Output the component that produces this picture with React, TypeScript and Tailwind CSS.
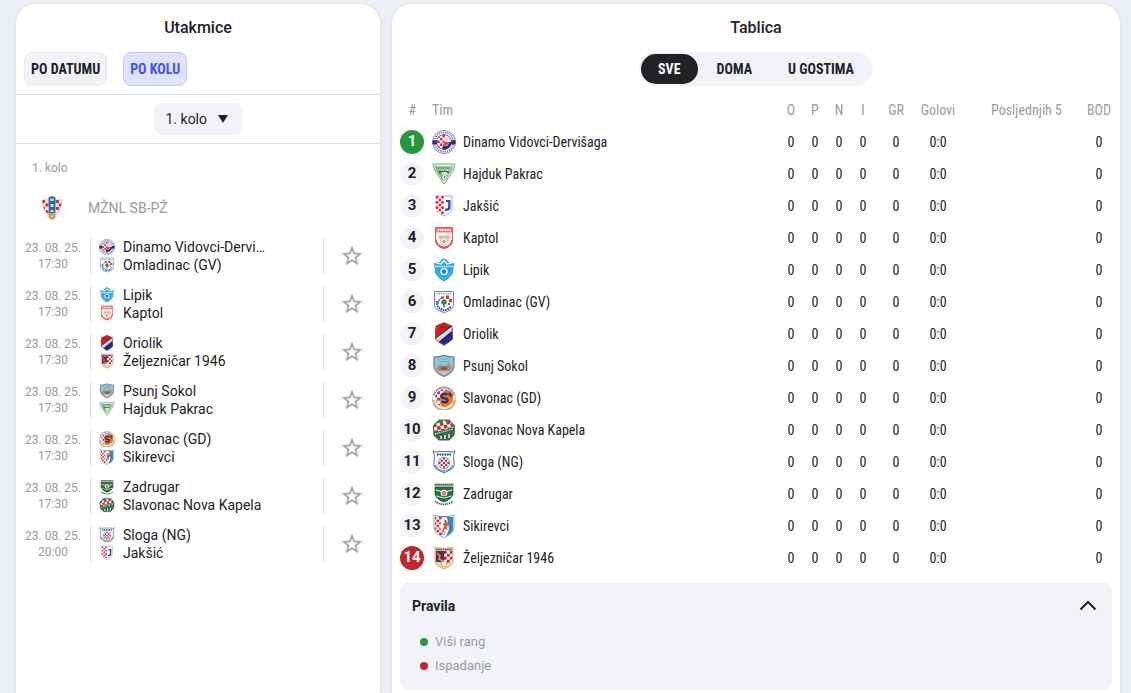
import { useId, useState } from 'react';
import type { ReactNode } from 'react';

interface Team {
  id: string;
  name: string;
}

interface Match {
  id: number;
  date: string;
  time: string;
  home: string;
  away: string;
}

const teams: Team[] = [
  { id: 'dinamo', name: 'Dinamo Vidovci-Dervišaga' },
  { id: 'hajduk', name: 'Hajduk Pakrac' },
  { id: 'jaksic', name: 'Jakšić' },
  { id: 'kaptol', name: 'Kaptol' },
  { id: 'lipik', name: 'Lipik' },
  { id: 'omladinac', name: 'Omladinac (GV)' },
  { id: 'oriolik', name: 'Oriolik' },
  { id: 'psunj', name: 'Psunj Sokol' },
  { id: 'slavonacgd', name: 'Slavonac (GD)' },
  { id: 'slavonacnk', name: 'Slavonac Nova Kapela' },
  { id: 'sloga', name: 'Sloga (NG)' },
  { id: 'zadrugar', name: 'Zadrugar' },
  { id: 'sikirevci', name: 'Sikirevci' },
  { id: 'zeljeznicar', name: 'Željezničar 1946' }
];

const matches: Match[] = [
  { id: 1, date: '23. 08. 25.', time: '17:30', home: 'dinamo', away: 'omladinac' },
  { id: 2, date: '23. 08. 25.', time: '17:30', home: 'lipik', away: 'kaptol' },
  { id: 3, date: '23. 08. 25.', time: '17:30', home: 'oriolik', away: 'zeljeznicar' },
  { id: 4, date: '23. 08. 25.', time: '17:30', home: 'psunj', away: 'hajduk' },
  { id: 5, date: '23. 08. 25.', time: '17:30', home: 'slavonacgd', away: 'sikirevci' },
  { id: 6, date: '23. 08. 25.', time: '17:30', home: 'zadrugar', away: 'slavonacnk' },
  { id: 7, date: '23. 08. 25.', time: '20:00', home: 'sloga', away: 'jaksic' }
];

const teamName = (id: string) => teams.find((t) => t.id === id)?.name ?? '';

// Red and white squares, used by most of the crests
function Checks({ x, y, cols, rows, size, color = '#e0242f' }: {
  x: number; y: number; cols: number; rows: number; size: number; color?: string;
}) {
  const cells: ReactNode[] = [];
  for (let r = 0; r < rows; r++) {
    for (let c = 0; c < cols; c++) {
      cells.push(
        <rect
          key={`${r}-${c}`}
          x={x + c * size}
          y={y + r * size}
          width={size}
          height={size}
          fill={(r + c) % 2 === 0 ? color : '#fff'}
        />
      );
    }
  }
  return <>{cells}</>;
}

const SHIELD = 'M3 2H21V14Q21 20 12 23Q3 20 3 14Z';

function crestArt(team: string, clip: string): ReactNode {
  switch (team) {
    case 'dinamo':
      return (
        <>
          <clipPath id={clip}><circle cx="12" cy="12" r="7.5" /></clipPath>
          <circle cx="12" cy="12" r="11.5" fill="#fff" stroke="#6b6aa0" strokeWidth=".8" />
          <circle cx="12" cy="12" r="9.6" fill="none" stroke="#6765a0" strokeWidth="1.6" strokeDasharray="1.2 1" />
          <rect x=".5" y="10.3" width="23" height="4" fill="#2d2a78" />
          <g clipPath={`url(#${clip})`}>
            <rect x="4" y="4" width="16" height="16" fill="#fff" />
            <Checks x={5} y={5} cols={3} rows={6} size={2.8} />
            <path d="M12 12H20V20H10Z" fill="#2d2a78" />
            <path d="M12.5 5.5L16 8L19 7L17 11H12.5Z" fill="#d9d9ec" />
          </g>
          <circle cx="12" cy="12" r="7.5" fill="none" stroke="#2d2a78" strokeWidth=".7" />
          <circle cx="14" cy="13.5" r="2.3" fill="#d5303f" stroke="#fff" strokeWidth=".6" />
        </>
      );
    case 'hajduk':
      return (
        <>
          <path d="M1 2H23L21 9L12 22L3 9Z" fill="#e8f3ea" stroke="#6fae7b" strokeWidth="1" />
          <path d="M3 4H8L11 19L4 8Z" fill="#5fb56e" />
          <path d="M21 4H17L14 17L20 8Z" fill="#8cc897" />
          <path d="M5 4H19V8H5Z" fill="#a9c8ae" />
          <path d="M6 6H18" stroke="#5a8a63" strokeWidth="2" strokeDasharray="1.3 1" />
          <path d="M7 10.5Q12 8 17 10.5" stroke="#2d6d3b" strokeWidth="1.4" fill="none" />
          <circle cx="12.5" cy="15" r="2.6" fill="#fff" stroke="#6f8a74" strokeWidth=".7" />
          <circle cx="12.5" cy="15" r=".9" fill="#5d7361" />
        </>
      );
    case 'jaksic':
      return (
        <>
          <clipPath id={clip}><path d="M4 2H12V21Q4 18 4 14Z" /></clipPath>
          <path d="M4 2H20V14Q20 19 12 22Q4 19 4 14Z" fill="#fff" stroke="#8e9bb5" strokeWidth=".8" />
          <g clipPath={`url(#${clip})`}><Checks x={4} y={2} cols={3} rows={8} size={2.6} /></g>
          <path d="M14 6H18.5V14Q18.5 17 13 17V14.8Q16.2 15 16.2 13V8H14Z" fill="#24519b" />
        </>
      );
    case 'kaptol':
      return (
        <>
          <path d="M3.5 1.5H20.5V14Q20.5 20 12 22.5Q3.5 20 3.5 14Z" fill="#fff" stroke="#e05a56" strokeWidth="1.2" />
          <rect x="4" y="2" width="16" height="4.5" fill="#ef7771" />
          <path d="M5.5 4.2H18.5" stroke="#fff" strokeWidth="1.7" strokeDasharray="1.6 .8" />
          <path d="M6 10L9 8.5L12 10L16 8L19 11L17 15H8Z" fill="#f3cdb9" />
          <path d="M7 11.5Q11 9 17 11.5" stroke="#a89a95" strokeWidth=".7" fill="none" />
          <path d="M4 14Q5 20.5 12 21.5Q19 20.5 20 14" fill="none" stroke="#e3453f" strokeWidth="1.5" />
          <circle cx="12" cy="15.5" r="3.7" fill="#f5f5f5" stroke="#a9a9a9" strokeWidth=".7" />
          <path d="M12 13.5L14 15L13 17.3H11L10 15Z" fill="#a3a3a3" />
        </>
      );
    case 'lipik':
      return (
        <>
          <path d="M2 5L8 4L9 1.5L12 .5L15 1.5L16 4L22 5L21 15Q18 20 12 23.5Q6 20 3 15Z" fill="#2aa3dc" />
          <path d="M4 5L9 6L12 2.5L15 6L20 5" fill="none" stroke="#dff3fc" strokeWidth="1.5" />
          <path d="M3 8.5H21" stroke="#fff" strokeWidth="1.7" strokeDasharray="1.4 .8" />
          <path d="M4 11Q6 18 12 21Q18 18 20 11" fill="none" stroke="#7ccbed" strokeWidth=".8" />
          <circle cx="12" cy="13.5" r="3.8" fill="#dff3fc" />
          <path d="M12 11L14.4 12.8L13.5 15.7H10.5L9.6 12.8Z" fill="#1787c4" />
        </>
      );
    case 'omladinac':
      return (
        <>
          <path d="M2.5 1.5H21.5V15Q21.5 20 12 22.5Q2.5 20 2.5 15Z" fill="#fff" stroke="#6c6fae" strokeWidth=".9" />
          <path d="M4.5 3.8H19.5" stroke="#9496c5" strokeWidth="1.5" strokeDasharray="1.3 .9" />
          <path d="M5 11A7.5 7.5 0 0 0 19 16" fill="none" stroke="#3e4298" strokeWidth="2.2" strokeDasharray="1.5 .8" />
          <path d="M6 14A7 7 0 0 1 12 7" fill="none" stroke="#6265ac" strokeWidth="1.2" />
          <path d="M9 6.500H12V8.500H9ZM14 5.500H17V9H14ZM17 9H20V12H17ZM16 13H18V15H16Z" fill="#e32b31" />
          <circle cx="12" cy="12" r="2.8" fill="#259b4c" />
          <path d="M11.3 13H12.7V17.5H11.3Z" fill="#1e7e3c" />
        </>
      );
    case 'oriolik':
      return (
        <>
          <clipPath id={clip}><path d="M12 .5L20 4L21 17L16 21L12 23.5L8 21L3 17L4 4Z" /></clipPath>
          <g clipPath={`url(#${clip})`}>
            <rect width="24" height="24" fill="#1d2b8f" />
            <path d="M0 0H22L2 18Z" fill="#dd1b1d" />
            <path d="M22 3V7L5 21L2 18Z" fill="#f5ecd9" />
            <path d="M6 18L20 7" stroke="#a3854e" strokeWidth=".6" strokeDasharray="1.5 .8" />
          </g>
          <path d="M12 .8L20 4L20.7 17L16 20.7L12 23L8 20.7L3.3 17L4 4Z" fill="none" stroke="#7d5533" strokeWidth=".9" />
          <path d="M8 5H14" stroke="#7e2225" strokeWidth="1.5" />
        </>
      );
    case 'psunj':
      return (
        <>
          <path d="M2 3Q7 3 12 1.2Q17 3 22 3V13Q21 19 12 22.5Q3 19 2 13Z" fill="#8cc8dc" stroke="#77767c" strokeWidth="1.2" />
          <path d="M6 5H18M7 7.5H17" stroke="#6f9db2" strokeWidth="1.2" strokeDasharray="1.5 .7" />
          <path d="M4 14L8 10L12 13L17 9L20 13L18 17H6Z" fill="#bc8672" />
          <path d="M8 14L12 12L16 14L14 16H10Z" fill="#7d5f56" />
          <path d="M8 17H16L12 21Z" fill="#eab7a3" />
        </>
      );
    case 'slavonacgd':
      return (
        <>
          <clipPath id={clip}><circle cx="12" cy="12" r="9" /></clipPath>
          <circle cx="12" cy="12" r="11.5" fill="#fff" stroke="#8c8ab0" strokeWidth=".6" />
          <path d="M1.5 14A10.5 10.5 0 0 0 22.5 14" fill="none" stroke="#c8a56b" strokeWidth="2.2" strokeDasharray="1.8 .4" />
          <path d="M2 9A10.5 10.5 0 0 1 22 9" fill="none" stroke="#5359a4" strokeWidth="1.5" strokeDasharray="1.2 .9" />
          <g clipPath={`url(#${clip})`}>
            <Checks x={2} y={2} cols={5} rows={6} size={3.2} />
            <path d="M13 3H22V22H8L10 15Z" fill="#ed7a16" />
          </g>
          <circle cx="14.5" cy="13" r="6.6" fill="#ed7a16" />
          <path d="M18 5L21 9L18.5 12L16 8Z" fill="#744127" />
          <path d="M15.5 8.5Q9.5 6.5 9.5 10Q9.5 12 12.5 12.3Q16 12.7 15.5 15Q14.5 17.5 9.5 15.5" fill="none" stroke="#1f3190" strokeWidth="2.4" />
        </>
      );
    case 'slavonacnk':
      return (
        <>
          <clipPath id={clip}><path d="M7 2H17L22.5 8L22 17L17 22H7L2 17L1.5 8Z" /></clipPath>
          <g clipPath={`url(#${clip})`}>
            <rect width="24" height="24" fill="#2c8a4d" />
            <g transform="rotate(-12 12 10)"><Checks x={2} y={4} cols={6} rows={3} size={3.4} /></g>
            <path d="M0 15L23 9V13L1 19Z" fill="#26723f" />
            <path d="M3 16L21 11" stroke="#d9ebdf" strokeWidth="1.3" strokeDasharray="1.3 .8" />
            <path d="M3 19L20 14.5L20 20L10 22Z" fill="#47564c" />
            <path d="M9 18V21M13 17V21M17 16V20" stroke="#eef3ef" strokeWidth="1.5" />
          </g>
          <path d="M7 2H17L22.5 8L22 17L17 22H7L2 17L1.5 8Z" fill="none" stroke="#2f7048" strokeWidth="1.1" />
          <circle cx="12" cy="3.5" r="1.2" fill="#d3e2d5" />
        </>
      );
    case 'sloga':
      return (
        <>
          <clipPath id={clip}><circle cx="12" cy="13" r="5.5" /></clipPath>
          <path d="M1 1Q4 3 7 1.5H17Q20 3 23 1Q20.5 6 22 12Q23 18 18 20L12 23L6 20Q1 18 2 12Q3.5 6 1 1Z" fill="#f3f7fb" stroke="#50759d" strokeWidth="1" />
          <path d="M5 4.5H19" stroke="#284c79" strokeWidth="1.9" strokeDasharray="1.7 .8" />
          <g clipPath={`url(#${clip})`}><Checks x={6.5} y={7.5} cols={5} rows={5} size={2.2} color="#c8202c" /></g>
          <circle cx="12" cy="13" r="5.7" fill="none" stroke="#5e80a5" strokeWidth=".7" />
          <path d="M3.5 15Q5 20.5 12 21Q19 20.5 20.5 15" fill="none" stroke="#5e80a5" strokeWidth="1.7" strokeDasharray="1.5 .6" />
        </>
      );
    case 'zadrugar':
      return (
        <>
          <path d="M2 1.5H22V4H2Z" fill="#b2aaae" />
          <path d="M3 2.7H21" stroke="#603e45" strokeWidth="1.3" strokeDasharray="1.3 .7" />
          <path d="M3 5H21V12Q20 17 12 20Q4 17 3 12Z" fill="#1d7442" stroke="#164e30" strokeWidth=".8" />
          <path d="M3.5 8L12 10L20.5 8" fill="none" stroke="#e2eee5" strokeWidth="1.2" />
          <path d="M4.5 14L12 16L19.5 14" fill="none" stroke="#e2eee5" strokeWidth="1" />
          <circle cx="12" cy="11" r="3.3" fill="#fff" />
          <path d="M12 8.5L14.5 10.5L13.5 13.5H10.5L9.5 10.5Z" fill="#e07373" />
          <path d="M3 19Q6 22 12 22.5Q18 22 21 19" fill="none" stroke="#4e568c" strokeWidth="1.7" strokeDasharray="1.4 .7" />
        </>
      );
    case 'sikirevci':
      return (
        <>
          <clipPath id={clip}><path d={SHIELD} /></clipPath>
          <path d="M2 1L7 2.5H17L22 1V14Q21 20 12 23.5Q3 20 2 14Z" fill="#fff" stroke="#6e8598" strokeWidth=".8" />
          <g clipPath={`url(#${clip})`}>
            <Checks x={2} y={3} cols={4} rows={7} size={2.6} />
            <path d="M12 3H10L8 13L11 23H14Z" fill="#fff" />
            <path d="M15 3H22V19L14 23L17 15Z" fill="#238fcb" />
          </g>
          <path d="M7 2.8H17" stroke="#42556b" strokeWidth="1" strokeDasharray="1.3 .8" />
          <circle cx="13.5" cy="7.5" r="1.3" fill="#744a3d" />
          <path d="M11 9.5L17 8L18 11L14.5 12L15.5 16L13 15L11 18L10 17L12 13Z" fill="#dc5134" />
          <circle cx="11.5" cy="19" r="1.5" fill="#fff" stroke="#474747" strokeWidth=".6" />
        </>
      );
    case 'zeljeznicar':
      return (
        <>
          <clipPath id={clip}><path d="M4 4H20V16Q19 19 12 22Q5 19 4 16Z" /></clipPath>
          <path d="M3 1.5L12 2.5L21 1.5V16Q20 20 12 23Q4 20 3 16Z" fill="#e9d7a3" stroke="#b59a63" strokeWidth=".7" />
          <g clipPath={`url(#${clip})`}>
            <rect x="4" y="5" width="9" height="11" fill="#5e275e" />
            <Checks x={12} y={5} cols={3} rows={4} size={2.9} color="#b62941" />
            <path d="M5 7L8 10L7 13L11 15" stroke="#d1a34c" strokeWidth="1.5" fill="none" />
          </g>
          <path d="M4 3.5H20" stroke="#744071" strokeWidth="1.7" strokeDasharray="1.6 .6" />
          <circle cx="12" cy="18" r="3" fill="#f5eccb" stroke="#b59a63" strokeWidth=".7" />
        </>
      );
    case 'croatia':
      return (
        <>
          <clipPath id={clip}><path d="M2 4H22Q21 15 15 19H9Q3 15 2 4Z" /></clipPath>
          <g clipPath={`url(#${clip})`}><Checks x={2} y={4} cols={6} rows={5} size={3.4} color="#e0262f" /></g>
          <path d="M2 4H22Q21 15 15 19H9Q3 15 2 4Z" fill="none" stroke="#d98a80" strokeWidth=".6" />
          <path d="M8.5 1.5L12 0L15.5 1.5L15 17H9Z" fill="#236ca5" />
          <path d="M10.5 2.5H13.5V5H10.5ZM10.5 8H13.5V11H10.5ZM10.5 14H13.5V16H10.5Z" fill="#d5e5ec" />
          <circle cx="12" cy="20.2" r="3.4" fill="#b89b55" />
          <circle cx="12" cy="20.2" r="1.8" fill="#d8c284" />
        </>
      );
    default:
      return null;
  }
}

function Crest({ team, className }: { team: string; className: string }) {
  const clip = useId();
  return (
    <svg viewBox="0 0 24 24" aria-hidden="true" className={`shrink-0 ${className}`}>
      {crestArt(team, clip)}
    </svg>
  );
}

function MatchRow({ match }: { match: Match }) {
  const [starred, setStarred] = useState(false);

  return (
    <li className="flex h-12 items-center">
      <div className="w-[74px] text-center text-xs leading-4 text-[#9a9ba1]">
        <div>{match.date}</div>
        <div>{match.time}</div>
      </div>
      <div className="flex h-9 min-w-0 flex-1 flex-col border-x border-[#dcdde0] pr-13 pl-2">
        {[match.home, match.away].map((id) => (
          <div key={id} className="flex h-[18px] items-center gap-2">
            <Crest team={id} className="size-4" />
            <span className="truncate text-sm leading-[18px]">{teamName(id)}</span>
          </div>
        ))}
      </div>
      <div className="flex w-14 justify-center">
        <button type="button" aria-label="Prati utakmicu" aria-pressed={starred} onClick={() => setStarred(!starred)}>
          <svg viewBox="0 0 24 24" className="size-6">
            <path
              d="M12 4L14.2 9.4L20 9.9L15.6 13.7L16.9 19.4L12 16.4L7.1 19.4L8.4 13.7L4 9.9L9.8 9.4Z"
              fill={starred ? '#a4a6b0' : 'none'}
              stroke="#a4a6b0"
              strokeWidth="1.8"
            />
          </svg>
        </button>
      </div>
    </li>
  );
}

function Matches() {
  const [mode, setMode] = useState('PO KOLU');

  return (
    <section className="rounded-t-[20px] bg-white shadow-[0_1px_4px_rgba(34,34,38,0.12)]">
      <h2 className="pt-3 text-center text-base leading-6 font-medium">Utakmice</h2>
      <div className="mt-3 flex gap-4 border-b border-[#dcdde0] px-2 pb-2">
        {['PO DATUMU', 'PO KOLU'].map((m) => (
          <button
            key={m}
            type="button"
            onClick={() => setMode(m)}
            className={`h-[34px] rounded-lg border px-1.5 font-['Roboto_Condensed',Roboto,sans-serif] text-sm font-bold ${
              mode === m
                ? 'border-[#c3c8fb] bg-[#e0e3ff] text-[#4353ee]'
                : 'border-[#e9eaef] bg-[#f2f3f8]'
            }`}
          >
            {m}
          </button>
        ))}
      </div>
      <div className="flex justify-center border-b border-[#dcdde0] py-2">
        <div className="relative">
          <select
            aria-label="Kolo"
            className="h-8 w-[89px] appearance-none rounded-lg bg-[#f2f3f8] pr-8 pl-3 text-sm"
          >
            <option>1. kolo</option>
            <option>2. kolo</option>
          </select>
          <svg viewBox="0 0 10 8" className="pointer-events-none absolute top-3 right-[15px] h-2 w-2.5" aria-hidden="true">
            <path d="M0 0H10L5 8Z" fill="#222226" />
          </svg>
        </div>
      </div>

      <p className="px-4 pt-4 text-xs leading-4 text-[#9a9ba1]">1. kolo</p>
      <div className="mt-2 flex h-12 items-center pl-6">
        <Crest team="croatia" className="size-6" />
        <span className="pl-6 text-sm text-[#9a9ba1]">MŽNL SB-PŽ</span>
      </div>
      <ul>
        {matches.map((match) => (
          <MatchRow key={match.id} match={match} />
        ))}
      </ul>
    </section>
  );
}

function rankColor(rank: number) {
  if (rank === 1) return 'bg-[#27963c] text-white';
  if (rank === teams.length) return 'bg-[#c1272d] text-white';
  return 'bg-[#f2f3f8]';
}

function Standings() {
  const [filter, setFilter] = useState('SVE');
  const [rulesOpen, setRulesOpen] = useState(true);

  return (
    <section className="rounded-t-[20px] bg-white px-2 shadow-[0_1px_4px_rgba(34,34,38,0.12)]">
      <h2 className="pt-3 text-center text-base leading-6 font-medium">Tablica</h2>
      <div className="mt-3 flex justify-center">
        <div className="flex gap-0.5 rounded-full bg-[#f2f3f8] p-0.5 font-['Roboto_Condensed',Roboto,sans-serif] text-sm font-bold">
          {['SVE', 'DOMA', 'U GOSTIMA'].map((f) => (
            <button
              key={f}
              type="button"
              onClick={() => setFilter(f)}
              className={`h-[30px] rounded-full px-[17px] ${filter === f ? 'bg-[#222226] text-white' : ''}`}
            >
              {f}
            </button>
          ))}
        </div>
      </div>

      <table className="mt-2 w-full table-fixed font-['Roboto_Condensed',Roboto,sans-serif] text-sm">
        <thead className="text-[#9a9ba1]">
          <tr className="h-8 [&>th]:font-normal">
            <th className="w-6">#</th>
            <th className="pl-2 text-left">Tim</th>
            <th className="w-6">O</th>
            <th className="w-6">P</th>
            <th className="w-6">N</th>
            <th className="w-6">I</th>
            <th className="w-[42px]">GR</th>
            <th className="w-[42px]">Golovi</th>
            <th className="w-[127px] pr-6 text-right">Posljednjih 5</th>
            <th className="w-[26px]">BOD</th>
          </tr>
        </thead>
        <tbody className="text-center">
          {teams.map((team, index) => (
            <tr key={team.id} className="h-8">
              <td>
                <span
                  className={`flex size-6 items-center justify-center rounded-full font-[Roboto,sans-serif] text-[15px] font-bold ${rankColor(index + 1)}`}
                >
                  {index + 1}
                </span>
              </td>
              <td className="pl-2">
                <a href={`#${team.id}`} className="flex items-center gap-[7px]">
                  <Crest team={team.id} className="size-6" />
                  {team.name}
                </a>
              </td>
              <td>0</td>
              <td>0</td>
              <td>0</td>
              <td>0</td>
              <td>0</td>
              <td>0:0</td>
              <td></td>
              <td>0</td>
            </tr>
          ))}
        </tbody>
      </table>

      <div className="mt-2 rounded-lg bg-[#f2f3f8]">
        <button
          type="button"
          aria-expanded={rulesOpen}
          onClick={() => setRulesOpen(!rulesOpen)}
          className="flex h-12 w-full items-center justify-between px-3 text-sm font-bold"
        >
          Pravila
          <svg viewBox="0 0 24 24" className={`size-6 ${rulesOpen ? '' : 'rotate-180'}`} aria-hidden="true">
            <path d="M4.5 15.5L12 8L19.5 15.5" fill="none" stroke="#222226" strokeWidth="2" />
          </svg>
        </button>
        {rulesOpen && (
          <ul className="px-5 pb-3 text-[13px] leading-6 text-[#9a9ba1]">
            <li className="flex items-center gap-[7px]">
              <span className="size-2 rounded-full bg-[#27963c]" />
              Viši rang
            </li>
            <li className="flex items-center gap-[7px]">
              <span className="size-2 rounded-full bg-[#c1272d]" />
              Ispadanje
            </li>
          </ul>
        )}
      </div>
    </section>
  );
}

export default function App() {
  return (
    <div className="grid min-h-screen grid-cols-[minmax(0,1fr)_minmax(0,2fr)] gap-3 bg-[#ecf0f5] pt-1 pr-[11px] pl-4 font-[Roboto,sans-serif] text-[#222226]">
      <Matches />
      <Standings />
    </div>
  );
}
